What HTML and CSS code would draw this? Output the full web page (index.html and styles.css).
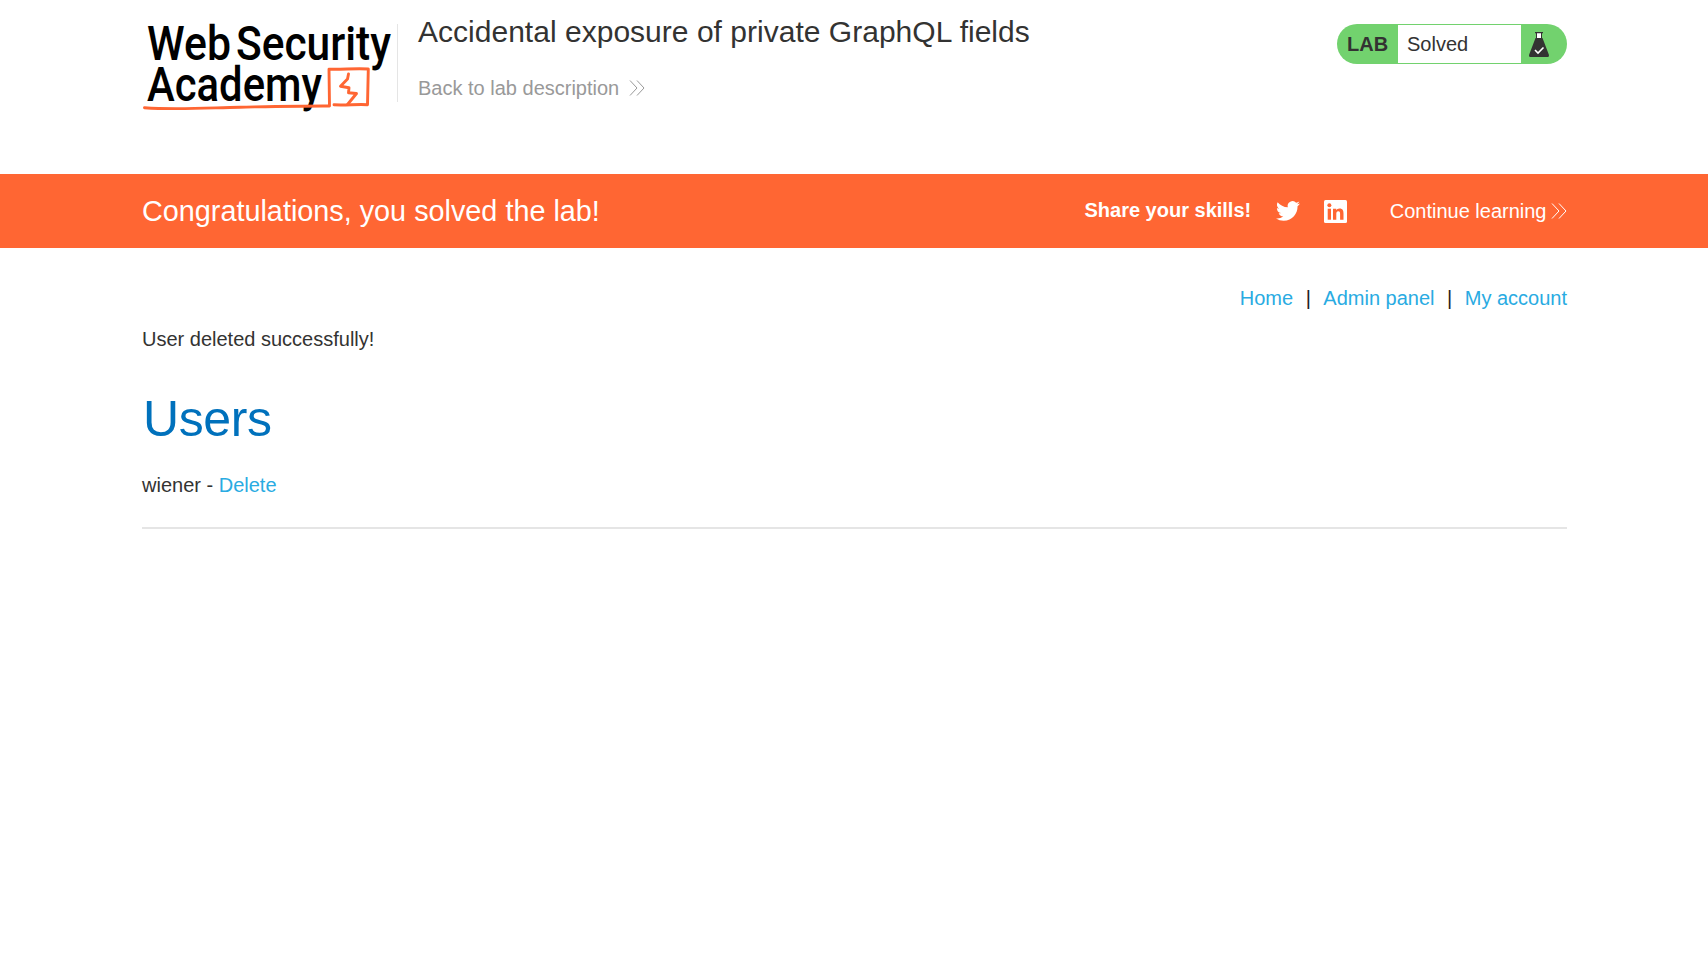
FILE: index.html
```html
<!DOCTYPE html>
<html lang="en">
<head>
<meta charset="utf-8">
<title>Accidental exposure of private GraphQL fields</title>
<link rel="stylesheet" href="styles.css">
</head>
<body>
<header class="header container">
  <svg class="logo" width="256" height="96" viewBox="142 20 256 96" role="img" aria-label="Web Security Academy">
    <g class="logo-text">
      <text x="147" y="60" textLength="84" lengthAdjust="spacingAndGlyphs">Web</text>
      <text x="236" y="60" textLength="155" lengthAdjust="spacingAndGlyphs">Security</text>
      <text x="147" y="101" textLength="175" lengthAdjust="spacingAndGlyphs">Academy</text>
    </g>
    <path class="logo-divider" d="M397.500 24V102"/>
    <g class="logo-mark">
      <path d="M144.500 107.700C175 110 205 108 240 107.200C275 106.500 303 105.800 329.500 106L329 69.200C342 69.800 355 68 368.300 69L367.500 104.700C357 104 346 105.500 334 104.800"/>
      <path d="M348.500 74L347.500 79L340.500 86.200L349 87.700L348.500 92.800L356.500 93.500L347.500 104.500"/>
    </g>
  </svg>
  <div class="title">
    <h2 class="lab-name">Accidental exposure of private GraphQL fields</h2>
    <a class="back">Back to lab description<svg class="chevrons" width="16" height="16" viewBox="0 0 16 16"><path d="M1 .5L8 8L1 15.500M8 .5L15 8L8 15.500"/></svg></a>
  </div>
  <div class="status">
    <span class="status-label">LAB</span>
    <p class="status-value">Solved</p>
    <svg class="flask" width="20" height="25" viewBox="0 0 20 25"><path fill="#fff" d="M7 1h6v5H7z"/><path fill="#333332" d="M6 0h8v1.300h-1V6h.5l6.300 16.500c.5 1.500-.2 2.500-1.500 2.500H1.700C.4 25-.3 24 .2 22.500L6.500 6H7V1.300H6zM8 1.300V6h4V1.300z" fill-rule="evenodd"/><path class="flask-check" d="M6 18l3 3 5.500-5.500"/></svg>
  </div>
</header>
<section class="banner">
  <div class="banner-inner container">
    <h4 class="congrats">Congratulations, you solved the lab!</h4>
    <div class="share">
      <span class="share-text">Share your skills!</span>
      <svg class="twitter" width="24" height="24" viewBox="0 0 24 24"><path fill="#fff" d="M23.950 4.570a10 10 0 0 1-2.820.78 4.960 4.960 0 0 0 2.160-2.730c-.95.560-2 .960-3.120 1.190a4.920 4.920 0 0 0-8.390 4.480C7.690 8.090 4.070 6.130 1.640 3.160a4.820 4.820 0 0 0-.67 2.480c0 1.710.87 3.210 2.190 4.100a4.900 4.900 0 0 1-2.230-.62v.06a4.920 4.920 0 0 0 3.950 4.830 5 5 0 0 1-2.210.08 4.940 4.940 0 0 0 4.600 3.420A9.870 9.870 0 0 1 0 19.540a14 14 0 0 0 7.550 2.210c9.050 0 14-7.500 14-13.980 0-.21 0-.42-.02-.63a9.900 9.900 0 0 0 2.460-2.550z"/></svg>
      <svg class="linkedin" width="23" height="23" viewBox="0 0 23 23"><rect width="23" height="23" rx="1.500" fill="#fff"/><path fill="#ff6633" d="M3.700 8.700h3.300v11H3.700z"/><circle cx="5.350" cy="5.300" r="2" fill="#ff6633"/><path fill="#ff6633" d="M9 8.700h3.200v1.500c.6-1 1.700-1.800 3.300-1.800 3.300 0 4 2.200 4 5.100v6.200h-3.400v-5.500c0-1.400 0-3-1.800-3s-2 1.400-2 2.900v5.600H9z"/></svg>
      <a class="continue">Continue learning<svg class="chevrons" width="16" height="16" viewBox="0 0 16 16"><path d="M1 .5L8 8L1 15.500M8 .5L15 8L8 15.500"/></svg></a>
    </div>
  </div>
</section>
<main class="container">
  <nav class="top-links"><a class="link">Home</a><span class="bar">|</span><a class="link">Admin panel</a><span class="bar">|</span><a class="link">My account</a></nav>
  <p class="message">User deleted successfully!</p>
  <h1 class="heading">Users</h1>
  <p class="user">wiener - <a class="link">Delete</a></p>
  <hr class="rule">
</main>
</body>
</html>
```
FILE: styles.css
```css
* { box-sizing: border-box; }
body { margin: 0; background: #fff; color: #333332; font: 20px/24px "Liberation Sans", Arial, sans-serif; }
h1, h2, h4, p { margin: 0; font-weight: 400; }
.container { width: 1425px; margin: 0 auto; position: relative; left: 0.5px; }
.header { height: 174px; display: flex; align-items: flex-start; }
.logo { margin-top: 20px; flex: none; overflow: visible; }
.logo-text { font: 500 48px Roboto, sans-serif; fill: #000; }
.logo-divider { stroke: #e5e5e5; stroke-width: 1; }
.logo-mark { fill: none; stroke: #ff6633; stroke-width: 2.900; stroke-linejoin: round; stroke-linecap: round; }
.title { margin-top: 14px; padding-left: 20px; flex: 1; display: flex; flex-direction: column; }
.lab-name { font-size: 30px; line-height: 36px; letter-spacing: 0.02px; }
.back { color: #999; margin-top: 26px; display: flex; align-items: center; gap: 10px; }
.chevrons { fill: none; stroke: currentColor; stroke-width: 1; }
.status { margin-top: 24px; width: 230px; height: 40px; border-radius: 20px; background: #72d26e; display: flex; align-items: center; }
.status-label { width: 61px; padding-left: 10px; font-weight: 700; line-height: 41px; }
.status-value { width: 123px; height: 38px; padding-left: 9px; background: #fff; line-height: 38px; }
.flask { margin-left: 8px; }
.flask-check { fill: none; stroke: #fff; stroke-width: 1.600; }
.banner { background: #ff6633; color: #fff; height: 74px; }
.banner-inner { height: 74px; display: flex; justify-content: space-between; align-items: center; }
.congrats { font-size: 28.800px; line-height: 34px; }
.share { display: flex; align-items: center; }
.share-text { font-weight: 700; padding-bottom: 2px; }
.twitter { margin-left: 24.500px; }
.linkedin { margin-left: 24px; }
.continue { margin-left: 43px; display: flex; align-items: center; gap: 4.500px; }
.top-links { display: flex; justify-content: flex-end; padding-top: 38px; }
.bar { margin: 0 12.500px; color: #222; }
.link { color: #29abe2; }
.message { margin-top: 17px; }
.heading { margin-top: 38px; padding-left: 1px; color: #0071bc; font-size: 50px; line-height: 60px; letter-spacing: -0.4px; }
.user { margin-top: 24px; }
.rule { margin: 30px 0 0; border: 0; height: 2px; background: #e5e5e5; }
```
